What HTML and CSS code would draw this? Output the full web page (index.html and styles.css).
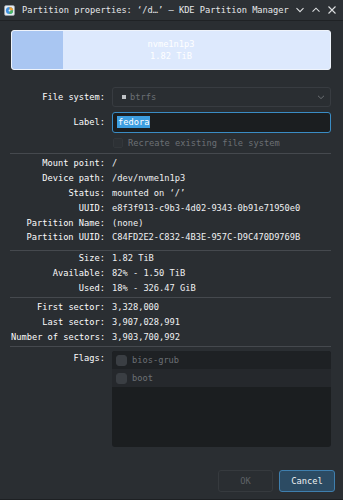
FILE: index.html
```html
<!DOCTYPE html>
<html lang="en">
<head>
  <meta charset="UTF-8">
  <meta name="viewport" content="width=device-width, initial-scale=1">
  <title>Partition properties</title>
  <link rel="stylesheet" href="styles.css">
</head>
<body>
  <div class="window">
    <!-- title bar -->
    <div class="titlebar">
      <svg class="app-icon" width="11" height="11" viewBox="0 0 11 11">
        <rect x="0.5" y="0.5" width="10" height="10" rx="1.5" fill="#e8ecf0" stroke="#9aa3ab" stroke-width="0.6"/>
        <circle cx="5.5" cy="5.5" r="3.6" fill="#3d8fe0"/>
        <path d="M5.5 5.5 L5.5 1.9 A3.6 3.6 0 0 1 9.1 5.5 Z" fill="#f0a030"/>
        <path d="M5.5 5.5 L9.1 5.5 A3.6 3.6 0 0 1 5.5 9.1 Z" fill="#4cb860"/>
        <circle cx="5.5" cy="5.5" r="1" fill="#e8ecf0"/>
      </svg>
      <span class="title">Partition properties: ‘/d…’ — KDE Partition Manager</span>
      <div class="controls">
        <svg width="10" height="10" viewBox="0 0 10 10"><path d="M1.5 3.2 L5 6.7 L8.5 3.2" fill="none" stroke="#dcdee0" stroke-width="1.1"/></svg>
        <svg width="10" height="10" viewBox="0 0 10 10"><path d="M1.5 6.7 L5 3.2 L8.5 6.7" fill="none" stroke="#dcdee0" stroke-width="1.1"/></svg>
        <svg width="10" height="10" viewBox="0 0 10 10"><path d="M1.5 1.5 L8.5 8.5 M8.5 1.5 L1.5 8.5" fill="none" stroke="#dcdee0" stroke-width="1.1"/></svg>
      </div>
    </div>

    <div class="content">
      <!-- partition graphic -->
      <div class="partbar">
        <div class="partbar-used"></div>
        <div class="partbar-text">
          <span>nvme1n1p3</span>
          <span>1.82 TiB</span>
        </div>
      </div>

      <!-- editable fields -->
      <div class="form">
        <span class="lbl">File system:</span>
        <div class="combo">
          <span class="fs-swatch"></span>
          <span class="combo-text">btrfs</span>
          <svg class="combo-arrow" width="8" height="8" viewBox="0 0 8 8"><path d="M1 2.8 L4 5.6 L7 2.8" fill="none" stroke="#6a6e72" stroke-width="1"/></svg>
        </div>

        <span class="lbl">Label:</span>
        <div class="input"><span class="selected">fedora</span></div>

        <span></span>
        <div class="check-row">
          <span class="checkbox"></span>
          <span class="dim">Recreate existing file system</span>
        </div>
      </div>

      <div class="sep sep-1"></div>

      <div class="info block-1">
        <span class="lbl">Mount point:</span><span class="val">/</span>
        <span class="lbl">Device path:</span><span class="val">/dev/nvme1n1p3</span>
        <span class="lbl">Status:</span><span class="val">mounted on ‘/’</span>
        <span class="lbl">UUID:</span><span class="val">e8f3f913-c9b3-4d02-9343-0b91e71950e0</span>
        <span class="lbl">Partition Name:</span><span class="val">(none)</span>
        <span class="lbl">Partition UUID:</span><span class="val">C84FD2E2-C832-4B3E-957C-D9C470D9769B</span>
      </div>

      <div class="sep sep-2"></div>

      <div class="info block-2">
        <span class="lbl">Size:</span><span class="val">1.82 TiB</span>
        <span class="lbl">Available:</span><span class="val">82% - 1.50 TiB</span>
        <span class="lbl">Used:</span><span class="val">18% - 326.47 GiB</span>
      </div>

      <div class="sep sep-3"></div>

      <div class="info block-3">
        <span class="lbl">First sector:</span><span class="val">3,328,000</span>
        <span class="lbl">Last sector:</span><span class="val">3,907,028,991</span>
        <span class="lbl">Number of sectors:</span><span class="val">3,903,700,992</span>
      </div>

      <div class="sep sep-4"></div>

      <div class="flags">
        <span class="lbl flags-lbl">Flags:</span>
        <div class="flag-list">
          <div class="flag-item"><span class="checkbox"></span><span class="dim">bios-grub</span></div>
          <div class="flag-item alt"><span class="checkbox"></span><span class="dim">boot</span></div>
        </div>
      </div>
    </div>

    <div class="footer">
      <button class="btn btn-disabled">OK</button>
      <button class="btn btn-default">Cancel</button>
    </div>
  </div>
</body>
</html>
```

FILE: styles.css
```css
/* dark dialog, Breeze-like */
body {
  margin: 0;
  background: #2a2e32;
  font-family: "DejaVu Sans Mono", monospace;
  font-size: 8.7px;
  color: #eff0f1;
}

.window {
  width: 343px;
  height: 500px;
  box-sizing: border-box;
  background: #2a2e32;
  border-bottom: 1px solid #1d2023;
}

/* title bar */
.titlebar {
  height: 20px;
  display: flex;
  align-items: center;
  background: #2d3135;
  border-bottom: 1px solid #1f2225;
  padding-left: 4px;
}

.app-icon {
  flex: none;
}

.title {
  margin-left: 7px;
  color: #e6e8ea;
  white-space: nowrap;
}

.controls {
  display: flex;
  gap: 6px;
  margin-left: auto;
  margin-right: 6px;
}

/* main area */
.content {
  padding: 9px 12px 0 11px;
}

.partbar {
  position: relative;
  height: 40px;
  box-sizing: border-box;
  border: 1px solid #eef3fb;
  border-radius: 3px;
  background: #dde9fd;
  overflow: hidden;
}

.partbar-used {
  width: 51px;
  height: 100%;
  background: #a9c6f2;
  border-radius: 2px 0 0 2px;
}

.partbar-text {
  position: absolute;
  inset: 0;
  display: flex;
  flex-direction: column;
  align-items: center;
  justify-content: center;
  line-height: 12px;
  color: #ffffff;
}

/* form grids */
.form,
.info,
.flags {
  display: grid;
  grid-template-columns: 94px 219px;
  column-gap: 7px;
}

.form {
  margin-top: 17px;
  grid-template-rows: 20px 20px 11px;
  row-gap: 5px;
  align-items: center;
}

.lbl {
  text-align: right;
  color: #fcfcfc;
  white-space: nowrap;
}

.val {
  white-space: nowrap;
}

.dim {
  color: #6c7075;
}

.combo {
  height: 20px;
  box-sizing: border-box;
  border: 1px solid #383c41;
  border-radius: 3px;
  display: flex;
  align-items: center;
  padding-left: 9px;
  padding-right: 5px;
}

.fs-swatch {
  width: 4px;
  height: 4px;
  background: #bfc2c5;
  margin-right: 4px;
}

.combo-text {
  color: #6c7075;
}

.combo-arrow {
  margin-left: auto;
}

.input {
  height: 21px;
  box-sizing: border-box;
  border: 1px solid #3a8cc4;
  border-radius: 3px;
  background: #1b1e20;
  display: flex;
  align-items: center;
  padding-left: 4px;
}

.selected {
  background: #3d9ee0;
  color: #ffffff;
  line-height: 12px;
  padding: 0 1px;
}

.check-row {
  display: flex;
  align-items: center;
  gap: 5px;
  margin-left: 1px;
}

.checkbox {
  width: 10px;
  height: 10px;
  box-sizing: border-box;
  border: 1px solid #33373b;
  border-radius: 2px;
  background: #2d3135;
  flex: none;
}

.sep {
  height: 1px;
  background: #45494e;
  margin-left: -1px;
}

.sep-1 { margin-top: 5px; }
.sep-2 { margin-top: 5px; }
.sep-3 { margin-top: 2px; }
.sep-4 { margin-top: 2px; }

.info {
  grid-auto-rows: 14.8px;
  align-items: center;
}

.block-1 { margin-top: 2px; }
.block-2 { margin-top: 0; }
.block-3 { margin-top: 1.5px; }

.flags {
  margin-top: 4px;
}

.flags-lbl {
  padding-top: 2px;
}

.flag-list {
  height: 96px;
  background: #1b1e20;
  border-radius: 3px;
  overflow: hidden;
}

.flag-item {
  height: 18px;
  display: flex;
  align-items: center;
  gap: 5px;
  padding-left: 4px;
  background: #1e2124;
}

.flag-item.alt {
  background: #25282c;
}

.flag-item .checkbox {
  width: 11px;
  height: 11px;
  background: #3a3e43;
  border-color: #3a3e43;
  border-radius: 3px;
}

/* dialog buttons */
.footer {
  display: flex;
  justify-content: flex-end;
  gap: 6px;
  margin-top: 23px;
  padding-right: 8px;
}

.btn {
  font-family: "DejaVu Sans Mono", monospace;
  font-size: 8.7px;
  height: 22px;
  border-radius: 3px;
  padding: 0;
}

.btn-disabled {
  width: 55px;
  background: #2a2e32;
  border: 1px solid #363a3e;
  color: #5e6266;
}

.btn-default {
  width: 56px;
  background: #2c4b63;
  border: 1px solid #3f7fae;
  color: #eff0f1;
}
```
